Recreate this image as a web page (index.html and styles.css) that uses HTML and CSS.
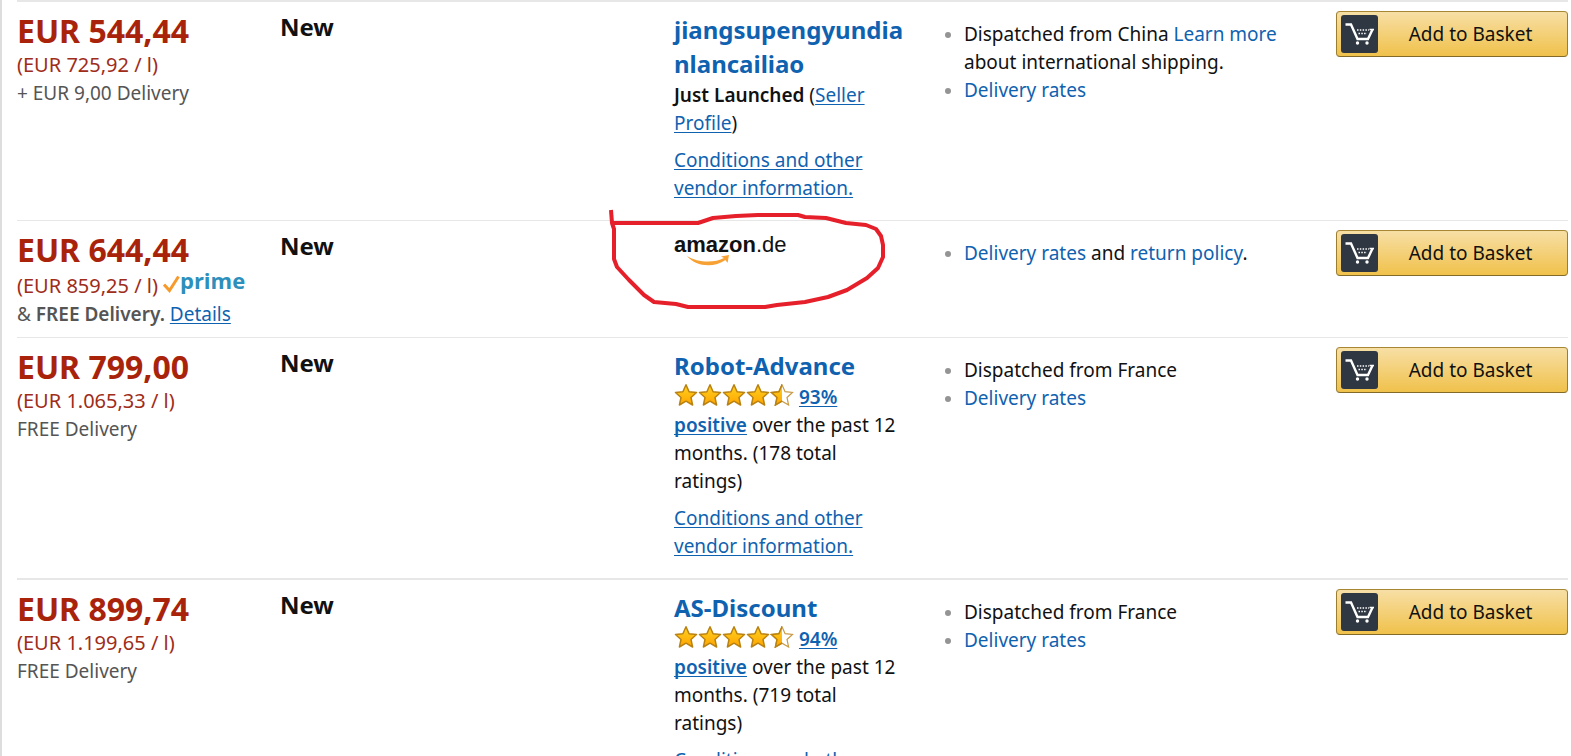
FILE: index.html
```html
<!DOCTYPE html>
<html lang="en">
<head>
<meta charset="utf-8">
<meta name="viewport" content="width=device-width, initial-scale=1">
<title>Offers</title>
<link rel="stylesheet" href="styles.css">
</head>
<body>
<svg class="defs" aria-hidden="true">
  <defs>
    <linearGradient id="gold" x1="0" y1="0" x2="0" y2="1"><stop offset="0" stop-color="#ffd21f"/><stop offset="1" stop-color="#ffa400"/></linearGradient>
    <path id="star-shape" d="M12 .8 15.100 7.700 22.500 8.500 17 13.500 18.600 21 12 17.200 5.400 21 7 13.500 1.500 8.500 8.900 7.700z"/>
    <clipPath id="left-half"><rect width="12" height="22"/></clipPath>
    <symbol id="stars" viewBox="0 0 120 22">
      <g fill="url(#gold)" stroke="#b98212" stroke-width="1.500" stroke-linejoin="round">
        <use href="#star-shape"/>
        <use href="#star-shape" x="24"/>
        <use href="#star-shape" x="48"/>
        <use href="#star-shape" x="72"/>
      </g>
      <g transform="translate(96 0)">
        <use href="#star-shape" fill="#fff" stroke="#c79a45" stroke-width="1.200"/>
        <use href="#star-shape" fill="url(#gold)" stroke="#b98212" stroke-width="1.500" clip-path="url(#left-half)"/>
      </g>
    </symbol>
    <symbol id="cart" viewBox="0 0 36 38">
      <path d="M4.500 9.500H10L16.500 24H27L31.500 14.500" fill="none" stroke="#fff" stroke-width="2.400"/>
      <path d="M28.500 14.500h4.500" stroke="#fff" stroke-width="1.500"/>
      <path d="M16 15h12M17.500 18.500h8.500" stroke="#fff" stroke-width="1.500" stroke-dasharray="1.500 1.300"/>
      <circle cx="16.500" cy="28" r="1.700" fill="#fff"/><circle cx="26" cy="28" r="1.700" fill="#fff"/>
    </symbol>
  </defs>
</svg>
<main class="offers">
  <article class="offer offer-strong">
    <div class="price-cell">
      <p class="price">EUR 544,44</p>
      <p class="unit">(EUR 725,92 / l)</p>
      <p class="shipping">+ EUR 9,00 Delivery</p>
    </div>
    <h3 class="condition">New</h3>
    <div class="seller">
      <h3 class="seller-name"><a href="#">jiangsupengyundianlancailiao</a></h3>
      <p><b>Just Launched</b> (<a class="underlined" href="#">Seller Profile</a>)</p>
      <p class="vendor"><a class="underlined" href="#">Conditions and other vendor information.</a></p>
    </div>
    <ul class="delivery">
      <li>Dispatched from China <a href="#">Learn more</a> about international shipping.</li>
      <li><a href="#">Delivery rates</a></li>
    </ul>
    <button class="basket" type="button"><span class="cart"><svg viewBox="0 0 36 38" aria-hidden="true"><use href="#cart"/></svg></span><span class="basket-label">Add to Basket</span></button>
  </article>

  <article class="offer offer-compact">
    <div class="price-cell">
      <p class="price">EUR 644,44</p>
      <p class="unit unit-prime">(EUR 859,25 / l)
        <span class="prime"><svg class="check" viewBox="0 0 17 18" aria-hidden="true"><path d="M1 9.500 6.500 15.500 15.500 1.500" fill="none" stroke="#f79a2c" stroke-width="3"/></svg><span class="prime-word">prime</span></span></p>
      <p class="shipping">&amp; <b>FREE Delivery.</b> <a class="underlined" href="#">Details</a></p>
    </div>
    <h3 class="condition">New</h3>
    <div class="seller seller-marked">
      <a class="logo" href="#"><span class="logo-text"><b>amazon</b>.de</span><svg class="smile" viewBox="0 0 44 11" aria-hidden="true"><path d="M1 1C11 7.500 28 8.500 38 3L35 1.500 43 0 41.500 8 39.500 5C28 13 10 12 1 1z" fill="#f7a134"/></svg></a>
      <svg class="marker" viewBox="0 0 300 120" aria-hidden="true"><path d="M11 10 12 23H98L113 18 136 16 158 15H198L205 17 226 18 246 23 266 25 276 29 281 36 283 45V57L278 68 267 78 247 90 228 97 205 102 177 105 165 107H88L76 104 54 102 44 95 29 80 17 67 14 59V29L12 23" fill="none" stroke="#e6202a" stroke-width="4" stroke-linejoin="round"/></svg>
    </div>
    <ul class="delivery">
      <li><a href="#">Delivery rates</a> and <a href="#">return policy</a>.</li>
    </ul>
    <button class="basket" type="button"><span class="cart"><svg viewBox="0 0 36 38" aria-hidden="true"><use href="#cart"/></svg></span><span class="basket-label">Add to Basket</span></button>
  </article>

  <article class="offer">
    <div class="price-cell">
      <p class="price">EUR 799,00</p>
      <p class="unit">(EUR 1.065,33 / l)</p>
      <p class="shipping">FREE Delivery</p>
    </div>
    <h3 class="condition">New</h3>
    <div class="seller">
      <h3 class="seller-name"><a href="#">Robot-Advance</a></h3>
      <p><svg class="stars" viewBox="0 0 120 22" role="img" aria-label="4.5 out of 5 stars"><use href="#stars"/></svg> <a class="underlined" href="#"><b>93% positive</b></a> over the past 12 months. (178 total ratings)</p>
      <p class="vendor"><a class="underlined" href="#">Conditions and other vendor information.</a></p>
    </div>
    <ul class="delivery">
      <li>Dispatched from France</li>
      <li><a href="#">Delivery rates</a></li>
    </ul>
    <button class="basket" type="button"><span class="cart"><svg viewBox="0 0 36 38" aria-hidden="true"><use href="#cart"/></svg></span><span class="basket-label">Add to Basket</span></button>
  </article>

  <article class="offer offer-strong">
    <div class="price-cell">
      <p class="price">EUR 899,74</p>
      <p class="unit">(EUR 1.199,65 / l)</p>
      <p class="shipping">FREE Delivery</p>
    </div>
    <h3 class="condition">New</h3>
    <div class="seller">
      <h3 class="seller-name"><a href="#">AS-Discount</a></h3>
      <p><svg class="stars" viewBox="0 0 120 22" role="img" aria-label="4.5 out of 5 stars"><use href="#stars"/></svg> <a class="underlined" href="#"><b>94% positive</b></a> over the past 12 months. (719 total ratings)</p>
      <p class="vendor"><a class="underlined" href="#">Conditions and other vendor information.</a></p>
    </div>
    <ul class="delivery">
      <li>Dispatched from France</li>
      <li><a href="#">Delivery rates</a></li>
    </ul>
    <button class="basket" type="button"><span class="cart"><svg viewBox="0 0 36 38" aria-hidden="true"><use href="#cart"/></svg></span><span class="basket-label">Add to Basket</span></button>
  </article>
</main>
</body>
</html>
```
FILE: styles.css
```css
* { box-sizing: border-box; }

body {
  margin: 0;
  background: #fff;
  color: #111;
  font: 19px/28px "Noto Sans", sans-serif;
}

h3, p, ul { margin: 0; padding: 0; }

a { color: #0f62b0; text-decoration: none; }
.underlined {
  text-decoration: underline;
  text-decoration-thickness: 1px;
  text-underline-offset: 2px;
  text-decoration-skip-ink: none;
}

.defs { position: absolute; width: 0; height: 0; }

.offers {
  height: 100vh;
  overflow: hidden;
  padding: 0 3px 0 15px;
  border-left: 2px solid #ddd;
}

.offer {
  display: grid;
  grid-template-columns: 263fr 394fr 261fr 401fr 232fr;
  align-items: start;
  padding: 8px 0 18px;
  border-top: 1px solid #e7e7e7;
}
.offer > * { min-width: 0; }
.offer-strong { border-top-width: 2px; }
.offer-compact { padding-bottom: 9px; }

.price {
  color: #a9230b;
  font-size: 32px;
  font-weight: 700;
  line-height: 41px;
}
.unit { color: #a02c1a; font-size: 20px; white-space: nowrap; }
.unit-prime { display: flex; gap: 5px; padding-top: 2px; }
.shipping { color: #555; }

.prime { display: flex; align-items: flex-start; }
.check { width: 17px; height: 18px; margin-top: 3px; }
.prime-word {
  color: #2d8fbb;
  font: 700 22px/16px "Open Sans", sans-serif;
}

.condition { font-size: 24px; font-weight: 700; line-height: 34px; }

.seller { padding: 3px 20px 0 0; }
.seller p { padding-right: 9px; }
.seller-name {
  font-size: 24px;
  font-weight: 700;
  line-height: 34px;
  overflow-wrap: anywhere;
}
.vendor { margin-top: 9px; }
.stars { width: 120px; height: 22px; vertical-align: -2px; }
b { font-weight: 600; }

.seller-marked { position: relative; }
.logo { display: flex; flex-direction: column; color: #111; }
.logo-text { font: 22px/26px "Liberation Sans", sans-serif; }
.logo-text b { font-weight: 700; }
.smile { width: 44px; height: 11px; margin: -3px 0 0 12px; }
.marker {
  position: absolute;
  top: -29px;
  left: -74px;
  width: 300px;
  height: 120px;
  pointer-events: none;
}

.delivery { padding: 10px 40px 0 29px; list-style: none; }
.delivery li { position: relative; }
.delivery li::before {
  content: "";
  position: absolute;
  top: 12px;
  left: -19px;
  width: 6px;
  height: 6px;
  border-radius: 50%;
  background: #949494;
}

.basket {
  display: flex;
  align-items: center;
  height: 46px;
  margin-top: 1px;
  padding: 3px 4px;
  border: 1px solid;
  border-color: #a88734 #9c7e31 #846a29;
  border-radius: 4px;
  background: linear-gradient(#f7dfa5, #f0c14b);
  color: #111;
  font: 19px/28px "Noto Sans", sans-serif;
}
.cart {
  flex: none;
  width: 37px;
  height: 38px;
  border-radius: 3px;
  background: #2f3742;
}
.cart svg { display: block; width: 36px; height: 38px; }
.basket-label { flex: 1; text-align: center; }
```
